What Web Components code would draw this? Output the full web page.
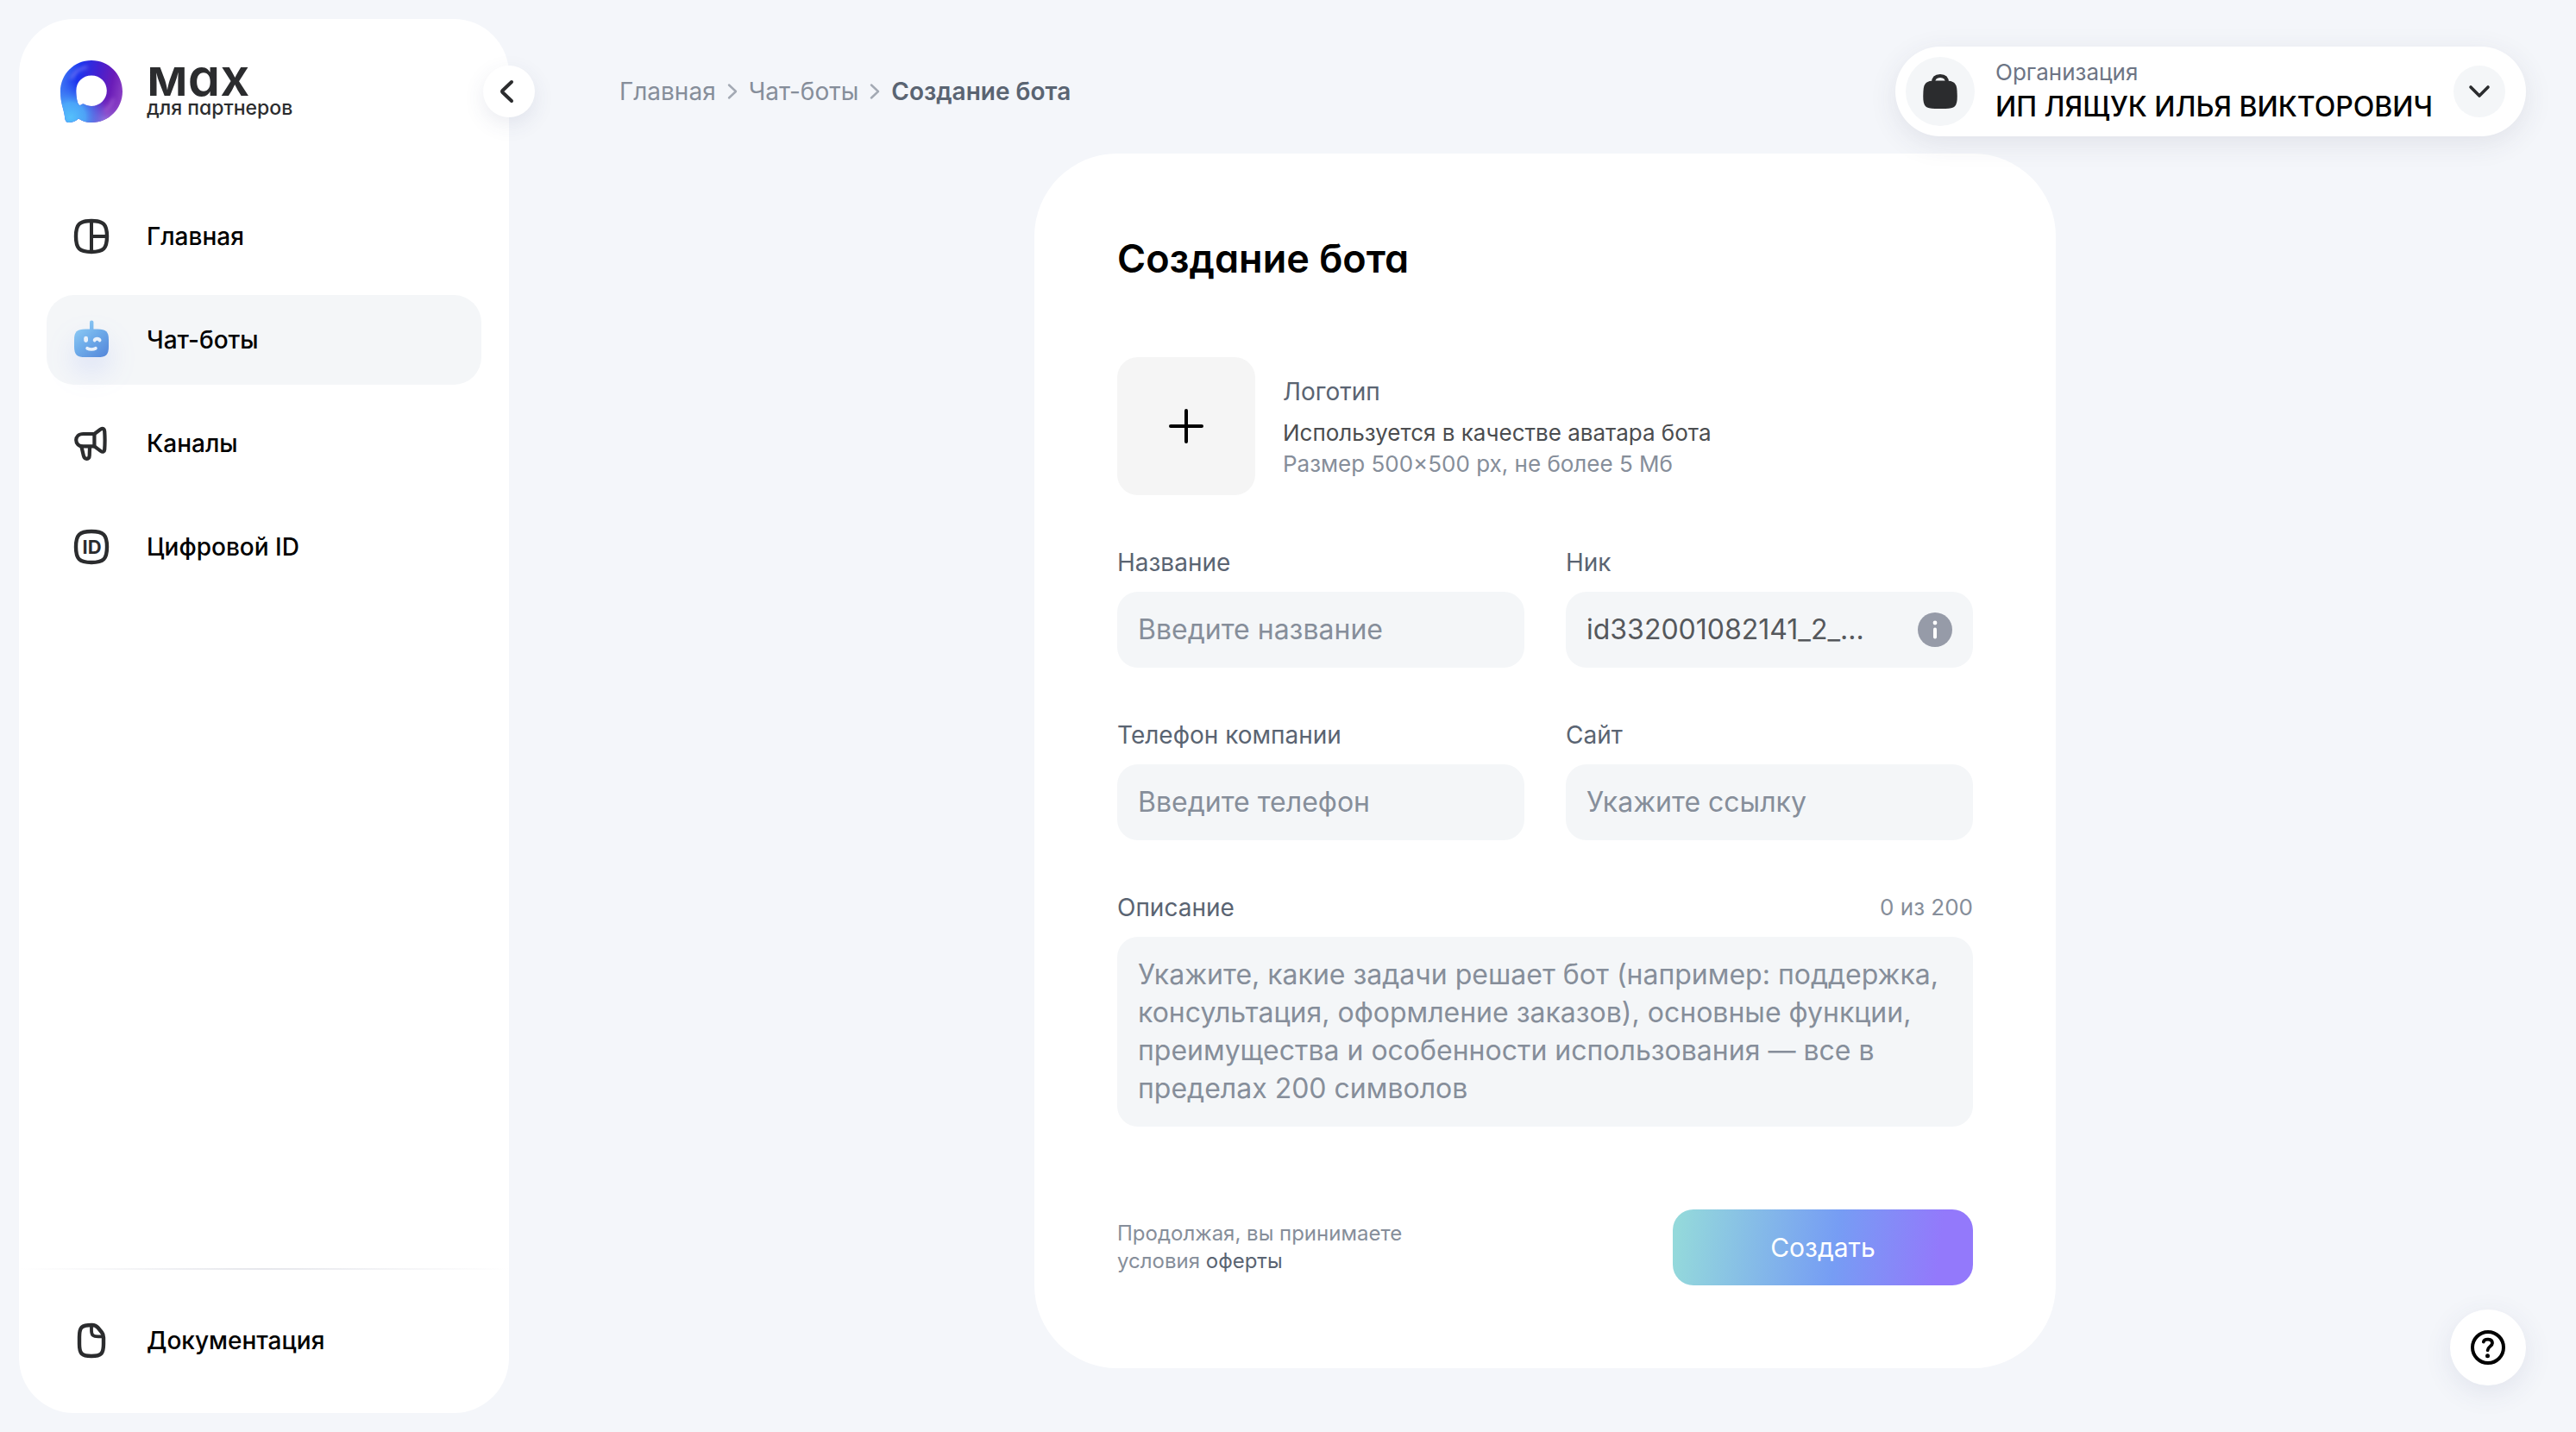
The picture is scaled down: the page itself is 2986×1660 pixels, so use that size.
<!DOCTYPE html>
<html lang="ru">
<head>
<meta charset="utf-8">
<title>Создание бота</title>
<style>
  :root {
    --page: #f4f6fa;
    --surface: #ffffff;
    --field: #f4f6f8;
    --ink: #000000;
    --icon: #2b2c2e;
    --text-label: #5a6472;
    --text-muted: #868e9a;
  }
  html, body {
    margin: 0;
    min-height: 100vh;
  }
  body {
    background: var(--page);
    color: var(--ink);
    font-family: Inter, "Liberation Sans", sans-serif;
    font-size: 28px;
    line-height: 36px;
  }
</style>
</head>
<body>
<app-shell>
  <side-bar slot="side">
    <side-logo slot="logo"></side-logo>
    <nav-item icon="home">Главная</nav-item>
    <nav-item icon="bot" active>Чат-боты</nav-item>
    <nav-item icon="channel">Каналы</nav-item>
    <nav-item icon="id">Цифровой ID</nav-item>
    <nav-item slot="bottom" icon="doc">Документация</nav-item>
  </side-bar>
  <bread-crumbs slot="head"></bread-crumbs>
  <org-switcher slot="head" name="ИП ЛЯЩУК ИЛЬЯ ВИКТОРОВИЧ">Организация</org-switcher>
  <bot-form></bot-form>
  <help-button slot="help"></help-button>
</app-shell>

<script>
const icons = {
  home: `<g fill="none" stroke="#2b2c2e" stroke-width="4.4">
      <path d="M24 6C38 6 42 10 42 24S38 42 24 42 6 38 6 24 10 6 24 6z"/>
      <path d="M24 6v36M24 24h18" stroke-width="4"/>
    </g>`,
  bot: `<defs><linearGradient id="b" x1="8" y1="6" x2="40" y2="44" gradientUnits="userSpaceOnUse">
      <stop stop-color="#8fccf5"/><stop offset=".45" stop-color="#6fadea"/><stop offset="1" stop-color="#5688da"/>
    </linearGradient></defs>
    <g fill="url(#b)">
      <rect x="22" y="1.4" width="4.4" height="14" rx="2"/>
      <path d="M24 11.4h7C41 11.4 44 14.5 44 24v7.400C44 41 41 44 31 44H17C7 44 4 41 4 31.400V24C4 14.500 7 11.400 17 11.400z"/>
    </g>
    <rect x="15.200" y="19.800" width="4.800" height="7.200" rx="2.400" fill="#e9f1fb"/>
    <g fill="none" stroke="#e9f1fb" stroke-width="3.800" stroke-linecap="round">
      <path d="M27.600 24.400c1-2.200 5-2.200 6 0"/>
      <path d="M19.200 33.800c2.600 1.500 7 1.500 9.600 0"/>
    </g>`,
  channel: `<g fill="none" stroke="#2b2c2e" stroke-width="4.200" stroke-linejoin="round" stroke-linecap="round">
      <path d="M27.400 13H14.500C3.500 13 3.500 27.400 14.500 27.400H27.400z"/>
      <path d="M27.400 13l7-5.200c3-2 4.600-.6 4.800 2.200.5 7 .5 14 0 21-.2 2.800-2 3.600-4.800 1.600l-7-5.200"/>
      <path d="M12.600 28.500l2.200 9.500c1.200 5.200 6.700 5 6.900 0l.3-9.500"/>
    </g>`,
  id: `<path fill="none" stroke="#2b2c2e" stroke-width="4.400" d="M24 6C38 6 42 10 42 24S38 42 24 42 6 38 6 24 10 6 24 6z"/>
    <text x="24.500" y="32" text-anchor="middle" font-family="Inter, sans-serif" font-size="22" font-weight="700" fill="#2b2c2e">ID</text>`,
  doc: `<g fill="none" stroke="#2b2c2e" stroke-width="4.400" stroke-linejoin="round">
      <path d="M24.500 6c3 0 5 .6 7 3l4.500 5.500c1.600 2 2 3.500 2 6V28c0 11-2.500 14-14 14S10 39 10 28v-8C10 8.500 12.500 6 24.500 6z"/>
      <path d="M24 6.500V12c0 6 1.800 7.400 8 7.400h5.500" stroke-width="3.800"/>
    </g>`,
};

class BaseElement extends HTMLElement {
  constructor() {
    super();
    this.attachShadow({ mode: "open" });
  }
  connectedCallback() {
    const template = document.createElement("template");
    template.innerHTML = this.html();
    this.shadowRoot.replaceChildren(template.content);
  }
}

class AppShell extends BaseElement {
  html() {
    return `
    <style>
      :host {
        display: grid;
        grid-template-columns: 596px minmax(0, 1fr);
        min-height: 100vh;
      }
      main {
        display: flex;
        flex-direction: column;
        gap: 20px;
        padding: 54px 0;
      }
      header {
        display: flex;
        align-items: center;
        justify-content: space-between;
        padding: 0 58px 0 122px;
        position: relative;
        z-index: 1;
      }
      .content {
        display: flex;
        justify-content: center;
      }
    </style>
    <slot name="side"></slot>
    <main>
      <header><slot name="head"></slot></header>
      <div class="content"><slot></slot></div>
    </main>
    <slot name="help"></slot>`;
  }
}

class SideBar extends BaseElement {
  html() {
    return `
    <style>
      :host {
        display: flex;
        flex-direction: column;
        box-sizing: border-box;
        position: sticky;
        top: 22px;
        height: calc(100vh - 44px);
        margin: 22px 6px 22px 22px;
        padding: 48px 0 32px;
        border-radius: 64px;
        background: var(--surface);
      }
      nav {
        display: flex;
        flex-direction: column;
        gap: 16px;
        padding: 80px 32px 0;
        flex: 1;
      }
      .bottom {
        padding: 30px 32px 0;
      }
      hr {
        width: 100%;
        height: 2px;
        margin: 0;
        border: 0;
        background: linear-gradient(90deg, transparent, #e6e7ec, transparent);
      }
      /* sits on the edge of the panel */
      button {
        position: absolute;
        top: 54px;
        right: -30px;
        width: 60px;
        height: 60px;
        padding: 0;
        border: 0;
        border-radius: 50%;
        background: var(--surface);
        box-shadow: 0 8px 24px rgba(60, 70, 120, .1);
      }
      svg {
        display: block;
        margin: auto;
      }
    </style>
    <slot name="logo"></slot>
    <nav><slot></slot></nav>
    <hr>
    <div class="bottom"><slot name="bottom"></slot></div>
    <button type="button" aria-label="Свернуть меню">
      <svg width="60" height="60" viewBox="0 0 60 60" fill="none" stroke="#2b2c2e" stroke-width="4" stroke-linecap="round" stroke-linejoin="round"><path d="M33 19L22.500 29Q21.500 30 22.500 31L33 41"/></svg>
    </button>`;
  }
}

class SideLogo extends BaseElement {
  html() {
    return `
    <style>
      :host {
        display: flex;
        gap: 28px;
        padding: 0 48px;
        height: 72px;
        color: var(--icon);
        font-feature-settings: "cv11";
      }
      div {
        display: flex;
        flex-direction: column;
      }
      b {
        font-size: 60px;
        line-height: 38px;
        font-weight: 600;
      }
      span {
        font-size: 23px;
        line-height: 34px;
        font-weight: 500;
      }
    </style>
    <svg width="72" height="72" viewBox="0 0 72 72">
      <defs>
        <linearGradient id="base" x1="0" y1="24" x2="72" y2="40" gradientUnits="userSpaceOnUse">
          <stop stop-color="#3f78f4"/><stop offset=".25" stop-color="#1c34ee"/><stop offset=".55" stop-color="#4420d0"/><stop offset=".8" stop-color="#6a1cb8"/><stop offset="1" stop-color="#8a3fc4"/>
        </linearGradient>
        <radialGradient id="cyan" cx="12" cy="66" r="42" gradientUnits="userSpaceOnUse">
          <stop stop-color="#55c0fb"/><stop offset=".4" stop-color="#4fb0fa" stop-opacity=".9"/><stop offset="1" stop-color="#3f78f4" stop-opacity="0"/>
        </radialGradient>
        <radialGradient id="lilac" cx="52" cy="72" r="30" gradientUnits="userSpaceOnUse">
          <stop stop-color="#a07be0"/><stop offset="1" stop-color="#8a3fc4" stop-opacity="0"/>
        </radialGradient>
        <filter id="soft" x="-50%" y="-50%" width="200%" height="200%"><feGaussianBlur stdDeviation="2"/></filter>
        <path id="ring" fill-rule="evenodd" d="M36 0C56 0 72 16 72 36S56 72 36 72C30.500 72 25.500 70.500 21 67.500 18 70.500 13.500 72 9.500 72 6 72 5.400 69 5 65 4 56 0 50 0 36 0 16 16 0 36 0zM36 17.500C26 17.500 18.300 25 18.300 35 18.300 43 20 52 22.500 52 24.500 52 24.500 50 27 50.500 29.500 52 32.500 53 36 53 46 53 53.800 45 53.800 35S46 17.500 36 17.500z"/>
        <clipPath id="clip"><use href="#ring" clip-rule="evenodd"/></clipPath>
      </defs>
      <use href="#ring" fill="url(#base)"/>
      <use href="#ring" fill="url(#lilac)"/>
      <use href="#ring" fill="url(#cyan)"/>
      <g clip-path="url(#clip)" fill="none" stroke-linecap="round" filter="url(#soft)">
        <path d="M13 20C17 13 23 9 30 8" stroke="#8a86f5" stroke-width="3" opacity=".7"/>
        <path d="M52 58C57 54 60 50 61 45" stroke="#b06fd8" stroke-width="3" opacity=".6"/>
      </g>
    </svg>
    <div><b>мах</b><span>для партнеров</span></div>`;
  }
}

class NavItem extends BaseElement {
  html() {
    return `
    <style>
      :host {
        display: block;
      }
      a {
        display: flex;
        align-items: center;
        gap: 40px;
        height: 104px;
        padding: 0 28px;
        border-radius: 32px;
        color: var(--ink);
        font-weight: 500;
        text-decoration: none;
      }
      :host([active]) a {
        background: var(--field);
      }
      :host([active]) svg {
        filter: drop-shadow(0 16px 16px rgba(90, 120, 240, .16));
      }
      svg {
        flex: none;
        overflow: visible;
      }
    </style>
    <a href="#">
      <svg width="48" height="48" viewBox="0 0 48 48">${icons[this.getAttribute("icon")]}</svg>
      <slot></slot>
    </a>`;
  }
}

class BreadCrumbs extends BaseElement {
  html() {
    const arrow = `<svg width="12" height="20" viewBox="0 0 12 20" fill="none" stroke="#a3a9b3" stroke-width="2.400" stroke-linecap="round" stroke-linejoin="round"><path d="M2 2.500l8 7.500-8 7.500"/></svg>`;
    return `
    <style>
      :host {
        display: block;
      }
      nav {
        display: flex;
        align-items: center;
        gap: 13px;
        color: var(--text-muted);
      }
      a {
        color: inherit;
        text-decoration: none;
      }
      span {
        color: var(--text-label);
        font-weight: 600;
      }
    </style>
    <nav>
      <a href="#">Главная</a>${arrow}<a href="#">Чат-боты</a>${arrow}<span>Создание бота</span>
    </nav>`;
  }
}

class OrgSwitcher extends BaseElement {
  html() {
    return `
    <style>
      :host {
        display: block;
      }
      button {
        display: flex;
        align-items: center;
        gap: 24px;
        height: 104px;
        padding: 0 24px 0 12px;
        border: 0;
        border-radius: 52px;
        background: var(--surface);
        box-shadow: 0 8px 32px rgba(60, 60, 90, .1);
        color: var(--ink);
        font: inherit;
        text-align: left;
      }
      .round {
        display: grid;
        place-items: center;
        width: 60px;
        height: 60px;
        border-radius: 50%;
        background: var(--field);
      }
      .avatar {
        width: 80px;
        height: 80px;
      }
      .text {
        display: flex;
        flex-direction: column;
      }
      .caption {
        font-size: 26px;
        color: #6d7585;
      }
      .name {
        font-size: 32px;
        line-height: 44px;
        font-weight: 500;
      }
    </style>
    <button type="button">
      <span class="round avatar">
        <svg width="40" height="40" viewBox="0 0 40 40">
          <path d="M12 10C12 4.500 15 2 20 2s8 2.500 8 8" fill="none" stroke="#2b2c2e" stroke-width="4"/>
          <path d="M20 7.500h6C36 7.500 39 10.500 39.500 19 40.500 36 39 40 26 40H14C1 40-.5 36 .5 19 1 10.500 4 7.500 14 7.500z" fill="#2b2c2e"/>
        </svg>
      </span>
      <span class="text">
        <span class="caption"><slot></slot></span>
        <span class="name">${this.getAttribute("name")}</span>
      </span>
      <span class="round">
        <svg width="26" height="16" viewBox="0 0 26 16" fill="none" stroke="#2b2c2e" stroke-width="3.600" stroke-linecap="round" stroke-linejoin="round"><path d="M3 3l10 10L23 3"/></svg>
      </span>
    </button>`;
  }
}

class FormField extends BaseElement {
  html() {
    const placeholder = this.getAttribute("placeholder") || "";
    const value = this.getAttribute("value");
    const counter = this.getAttribute("counter");
    const control = this.hasAttribute("multiline")
      ? `<textarea id="control" rows="4" placeholder="${placeholder}"></textarea>`
      : `<input id="control" type="text" placeholder="${placeholder}" ${value ? `value="${value}" readonly` : ""}>`;
    return `
    <style>
      :host {
        display: flex;
        flex-direction: column;
        gap: 16px;
        min-width: 0;
      }
      .top {
        display: flex;
        align-items: center;
        justify-content: space-between;
      }
      label {
        color: var(--text-label);
      }
      .counter {
        font-size: 26px;
        color: var(--text-muted);
      }
      .box {
        display: flex;
        align-items: center;
        gap: 16px;
        padding: 22px 24px;
        border-radius: 24px;
        background: var(--field);
      }
      input, textarea {
        flex: 1;
        min-width: 0;
        height: 44px;
        margin: 0;
        padding: 0;
        border: 0;
        outline: 0;
        background: none;
        color: #55585c;
        font: inherit;
        font-size: 32px;
        line-height: 44px;
        resize: none;
      }
      textarea {
        height: 176px;
        overflow: hidden;
      }
      ::placeholder {
        color: var(--text-muted);
        opacity: 1;
      }
    </style>
    <div class="top">
      <label for="control"><slot></slot></label>
      ${counter ? `<span class="counter">${counter}</span>` : ""}
    </div>
    <div class="box">${control}<slot name="after"></slot></div>`;
  }
}

class InfoIcon extends BaseElement {
  html() {
    return `
    <style>
      :host, svg {
        display: block;
      }
    </style>
    <svg width="40" height="40" viewBox="0 0 40 40">
      <circle cx="20" cy="20" r="20" fill="#969ba8"/>
      <circle cx="20" cy="12" r="2.400" fill="#fff"/>
      <path d="M20 19.500v9" stroke="#fff" stroke-width="4" stroke-linecap="round"/>
    </svg>`;
  }
}

class LogoUpload extends BaseElement {
  html() {
    return `
    <style>
      :host {
        display: flex;
        align-items: center;
        gap: 32px;
      }
      button {
        display: grid;
        place-items: center;
        width: 160px;
        height: 160px;
        padding: 0;
        border: 0;
        border-radius: 24px;
        background: #f5f5f5;
      }
      div {
        padding-top: 4px;
      }
      label {
        display: block;
        margin-bottom: 12px;
        color: var(--text-label);
      }
      p {
        margin: 0;
        font-size: 26px;
        color: #4b4d50;
      }
      p + p {
        color: var(--text-muted);
      }
    </style>
    <button type="button" id="upload">
      <svg width="40" height="40" viewBox="0 0 40 40" stroke="#000" stroke-width="4" stroke-linecap="round"><path d="M20 2v36M2 20h36"/></svg>
    </button>
    <div>
      <label for="upload">Логотип</label>
      <p>Используется в качестве аватара бота</p>
      <p>Размер 500×500 px, не более 5 Мб</p>
    </div>`;
  }
}

class BotForm extends BaseElement {
  html() {
    return `
    <style>
      :host {
        display: block;
        box-sizing: border-box;
        width: 100%;
        max-width: 1184px;
        padding: 96px;
        border-radius: 96px;
        background: var(--surface);
      }
      form {
        display: flex;
        flex-direction: column;
        gap: 60px;
      }
      h1 {
        margin: 0 0 28px;
        font-size: 45px;
        line-height: 52px;
        font-weight: 600;
        font-feature-settings: "cv11";
      }
      .fields {
        display: grid;
        grid-template-columns: repeat(2, minmax(0, 1fr));
        gap: 60px 48px;
      }
      .wide {
        grid-column: 1 / -1;
      }
      footer {
        display: flex;
        align-items: center;
        justify-content: space-between;
        margin-top: 36px;
      }
      p {
        margin: 0;
        max-width: 400px;
        font-size: 24px;
        line-height: 32px;
        color: var(--text-muted);
      }
      a {
        color: var(--text-label);
        text-decoration: none;
      }
      button {
        width: 348px;
        height: 88px;
        border: 0;
        border-radius: 24px;
        background: linear-gradient(97deg, #94d9db 2%, #769df4 54%, #9379fb 88%);
        color: #fff;
        font: inherit;
        font-size: 30px;
      }
    </style>
    <form>
      <h1>Создание бота</h1>
      <logo-upload></logo-upload>
      <div class="fields">
        <form-field placeholder="Введите название">Название</form-field>
        <form-field value="id332001082141_2_...">Ник<info-icon slot="after"></info-icon></form-field>
        <form-field placeholder="Введите телефон">Телефон компании</form-field>
        <form-field placeholder="Укажите ссылку">Сайт</form-field>
        <form-field class="wide" multiline counter="0 из 200"
          placeholder="Укажите, какие задачи решает бот (например: поддержка, консультация, оформление заказов), основные функции, преимущества и особенности использования — все в пределах 200 символов">Описание</form-field>
      </div>
      <footer>
        <p>Продолжая, вы принимаете<br>условия <a href="#">оферты</a></p>
        <button type="button">Создать</button>
      </footer>
    </form>`;
  }
}

class HelpButton extends BaseElement {
  html() {
    return `
    <style>
      :host {
        position: fixed;
        right: 58px;
        bottom: 54px;
      }
      button {
        display: grid;
        place-items: center;
        width: 88px;
        height: 88px;
        padding: 0;
        border: 0;
        border-radius: 50%;
        background: var(--surface);
        box-shadow: 0 8px 32px rgba(60, 70, 120, .1);
      }
    </style>
    <button type="button" aria-label="Помощь">
      <svg width="40" height="40" viewBox="0 0 40 40" fill="none" stroke="#000" stroke-width="4" stroke-linecap="round" stroke-linejoin="round">
        <circle cx="20" cy="20" r="18"/>
        <path d="M14.800 13.500C16 9.500 25 9.500 25 15c0 3.600-5.400 4.200-5.400 8.200" stroke-width="3.800"/>
        <circle cx="19.500" cy="29.800" r="2.500" fill="#000" stroke="none"/>
      </svg>
    </button>`;
  }
}

customElements.define("app-shell", AppShell);
customElements.define("side-bar", SideBar);
customElements.define("side-logo", SideLogo);
customElements.define("nav-item", NavItem);
customElements.define("bread-crumbs", BreadCrumbs);
customElements.define("org-switcher", OrgSwitcher);
customElements.define("form-field", FormField);
customElements.define("info-icon", InfoIcon);
customElements.define("logo-upload", LogoUpload);
customElements.define("bot-form", BotForm);
customElements.define("help-button", HelpButton);
</script>
</body>
</html>
